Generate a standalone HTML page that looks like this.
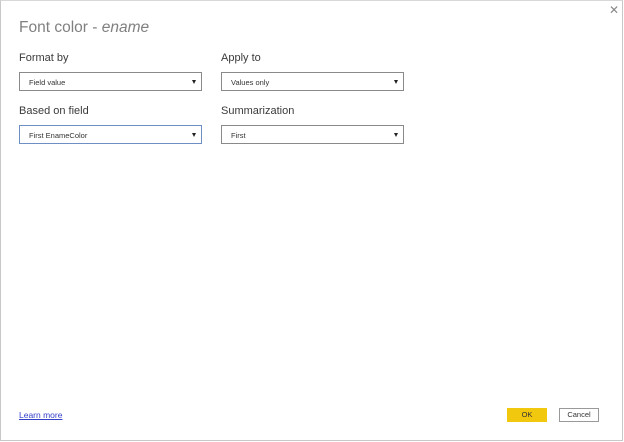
<!DOCTYPE html>
<html><head><meta charset="utf-8"><style>
*{margin:0;padding:0;box-sizing:border-box}
body{width:624px;height:442px;background:#fff;font-family:"Liberation Sans",sans-serif;position:relative;overflow:hidden}
.frame{position:absolute;left:0;top:0;width:623px;height:441px;border:1px solid #c8c8c8;border-top-color:#d8d8d8}
.t{position:absolute;left:19px;top:19px;font-size:15.5px;color:#808080}
.l{position:absolute;font-size:11px;color:#3a3a3a}
.dd{position:absolute;width:183px;height:19px;border:1px solid #8a8a8a;font-size:7.5px;color:#333;padding:5px 0 0 9px}
.dd.f{border-color:#6d8fc4}
.dd:after{content:"";position:absolute;right:5px;top:7px;border-left:2.5px solid transparent;border-right:2.5px solid transparent;border-top:4px solid #222}
.x{position:absolute;left:609px;top:3px;font-size:12px;color:#888}
.a{position:absolute;left:19px;top:410px;font-size:8.5px;color:#3440c8;text-decoration:underline}
.ok{position:absolute;left:507px;top:408px;width:40px;height:14px;background:#f2c80f;font-size:7.5px;text-align:center;line-height:14px;color:#333}
.cn{position:absolute;left:559px;top:408px;width:40px;height:14px;border:1px solid #999;font-size:7.5px;text-align:center;line-height:12px;color:#333}
</style></head><body>
<div class="frame"></div>
<div class="x">✕</div>
<div class="t">Font color - <i>ename</i></div>
<div class="l" style="left:19px;top:52px">Format by</div>
<div class="l" style="left:221px;top:52px">Apply to</div>
<div class="dd" style="left:19px;top:72px">Field value</div>
<div class="dd" style="left:221px;top:72px">Values only</div>
<div class="l" style="left:19px;top:105px">Based on field</div>
<div class="l" style="left:221px;top:105px">Summarization</div>
<div class="dd f" style="left:19px;top:125px">First EnameColor</div>
<div class="dd" style="left:221px;top:125px">First</div>
<div class="a">Learn more</div>
<div class="ok">OK</div>
<div class="cn">Cancel</div>
</body></html>
